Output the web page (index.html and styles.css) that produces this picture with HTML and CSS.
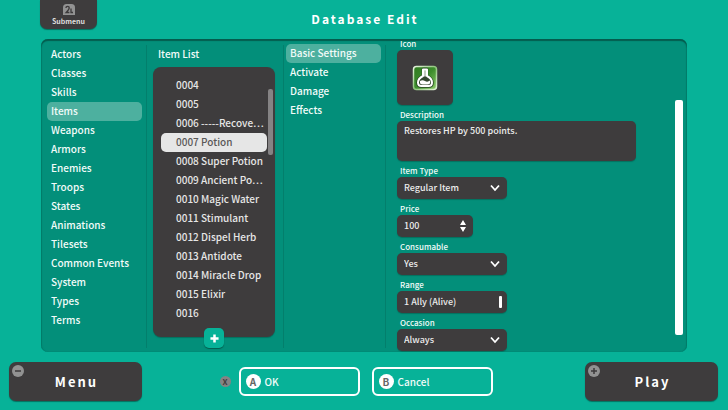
FILE: index.html
```html
<!DOCTYPE html>
<html lang="en">
<head>
<meta charset="utf-8">
<meta name="viewport" content="width=device-width, initial-scale=1">
<title>Database Edit</title>
<link rel="stylesheet" href="styles.css">
</head>
<body>
<header class="header">
  <button class="submenu" type="button">
    <svg class="submenu-key" viewBox="0 0 12 11" aria-hidden="true">
      <path d="M3.5 0H8.5Q12 0 12 3.5V11H0V3.5Q0 0 3.500 0Z" fill="#929292"/>
      <path d="M3 4Q3 2.300 4.600 2.300Q6.200 2.300 6.200 4Q6.200 5.400 3.200 8.500H6.400M8 4.500V8.500H10" fill="none" stroke="#3c3a3b" stroke-width="1.300"/>
    </svg>
    <span>Submenu</span>
  </button>
  <h1 class="title">Database Edit</h1>
</header>

<main class="panel">
  <nav class="column categories">
    <button class="tab" type="button">Actors</button>
    <button class="tab" type="button">Classes</button>
    <button class="tab" type="button">Skills</button>
    <button class="tab tab-active" type="button">Items</button>
    <button class="tab" type="button">Weapons</button>
    <button class="tab" type="button">Armors</button>
    <button class="tab" type="button">Enemies</button>
    <button class="tab" type="button">Troops</button>
    <button class="tab" type="button">States</button>
    <button class="tab" type="button">Animations</button>
    <button class="tab" type="button">Tilesets</button>
    <button class="tab" type="button">Common Events</button>
    <button class="tab" type="button">System</button>
    <button class="tab" type="button">Types</button>
    <button class="tab" type="button">Terms</button>
  </nav>

  <section class="column items">
    <h2 class="items-title">Item List</h2>
    <div class="item-box">
      <div class="item-list">
        <button class="item" type="button">0004</button>
        <button class="item" type="button">0005</button>
        <button class="item" type="button">0006 -----Recove⋯</button>
        <button class="item item-active" type="button">0007 Potion</button>
        <button class="item" type="button">0008 Super Potion</button>
        <button class="item" type="button">0009 Ancient Po⋯</button>
        <button class="item" type="button">0010 Magic Water</button>
        <button class="item" type="button">0011 Stimulant</button>
        <button class="item" type="button">0012 Dispel Herb</button>
        <button class="item" type="button">0013 Antidote</button>
        <button class="item" type="button">0014 Miracle Drop</button>
        <button class="item" type="button">0015 Elixir</button>
        <button class="item" type="button">0016</button>
      </div>
      <span class="item-thumb"></span>
      <button class="add" type="button" aria-label="Add">
        <svg viewBox="0 0 10 10" aria-hidden="true"><path d="M5 0.500V9.500M0.500 5H9.500" stroke="#fff" stroke-width="2.800"/></svg>
      </button>
    </div>
  </section>

  <nav class="column sections">
    <button class="tab tab-active" type="button">Basic Settings</button>
    <button class="tab" type="button">Activate</button>
    <button class="tab" type="button">Damage</button>
    <button class="tab" type="button">Effects</button>
  </nav>

  <form class="form">
    <label class="label" for="icon">Icon</label>
    <button class="box icon-box" id="icon" type="button">
      <svg class="potion" viewBox="0 0 26 26" aria-hidden="true">
        <defs>
          <linearGradient id="green" x1="0" y1="0" x2="1" y2="1">
            <stop offset="0" stop-color="#2f7a20"/>
            <stop offset="0.500" stop-color="#3c8d2c"/>
            <stop offset="1" stop-color="#8fce6c"/>
          </linearGradient>
          <linearGradient id="frame" x1="0" y1="0" x2="1" y2="1">
            <stop offset="0" stop-color="#e6f5df"/>
            <stop offset="0.500" stop-color="#8cc47a"/>
            <stop offset="1" stop-color="#e2f3d8"/>
          </linearGradient>
        </defs>
        <rect x="1.500" y="1.500" width="23" height="23" rx="3" fill="url(#green)" stroke="url(#frame)" stroke-width="1.500"/>
        <path d="M11 4H15V10.500Q20.500 13.500 20.500 17.500Q20.500 21.500 17 21.500H9Q5.500 21.500 5.500 17.500Q5.500 13.500 11 10.500Z" fill="none" stroke="#234020" stroke-width="2.500" stroke-linejoin="round"/>
        <path d="M11 4.500H15V11Q20 13.500 20 17.500Q20 21 16.500 21H9.500Q6 21 6 17.500Q6 13.500 11 11Z" fill="#33462f" stroke="#fff" stroke-width="2" stroke-linejoin="round"/>
        <path d="M12.200 5H13.800V11.500H12.200Z" fill="#e8efe5"/>
        <path d="M8 16Q10.500 14.500 13 16T18 15.500Q19 19.500 15.500 19.500H10.500Q7.500 19.500 8 16Z" fill="#fff"/>
      </svg>
    </button>

    <label class="label" for="description">Description</label>
    <textarea class="box description" id="description">Restores HP by 500 points.</textarea>

    <label class="label" for="item-type">Item Type</label>
    <div class="field">
      <select class="box control" id="item-type"><option>Regular Item</option></select>
      <svg class="chevron" viewBox="0 0 10 8" aria-hidden="true"><path d="M1 1.500L5 6L9 1.500"/></svg>
    </div>

    <label class="label" for="price">Price</label>
    <div class="field field-short">
      <input class="box control" id="price" type="number" value="100">
      <svg class="spinner" viewBox="0 0 6 12" aria-hidden="true"><path d="M3 0L6 5H0ZM3 12L0 7H6Z"/></svg>
    </div>

    <label class="label" for="consumable">Consumable</label>
    <div class="field">
      <select class="box control" id="consumable"><option>Yes</option></select>
      <svg class="chevron" viewBox="0 0 10 8" aria-hidden="true"><path d="M1 1.500L5 6L9 1.500"/></svg>
    </div>

    <label class="label" for="range">Range</label>
    <button class="box control range" id="range" type="button">1 Ally (Alive)<span class="range-mark"></span></button>

    <label class="label" for="occasion">Occasion</label>
    <div class="field">
      <select class="box control" id="occasion"><option>Always</option></select>
      <svg class="chevron" viewBox="0 0 10 8" aria-hidden="true"><path d="M1 1.500L5 6L9 1.500"/></svg>
    </div>
    <span class="form-thumb"></span>
  </form>
</main>

<footer class="footer">
  <button class="big" type="button">
    <svg class="badge" viewBox="0 0 12 12" aria-hidden="true"><circle cx="6" cy="6" r="6" fill="#929292"/><path d="M3 6H9" stroke="#3c3a3b" stroke-width="1.500"/></svg>
    Menu
  </button>
  <div class="prompts">
    <span class="key-x">X</span>
    <button class="prompt" type="button"><span class="key">A</span>OK</button>
    <button class="prompt" type="button"><span class="key">B</span>Cancel</button>
  </div>
  <button class="big" type="button">
    <svg class="badge" viewBox="0 0 12 12" aria-hidden="true"><circle cx="6" cy="6" r="6" fill="#929292"/><path d="M3 6H9M6 3V9" stroke="#3c3a3b" stroke-width="1.500"/></svg>
    Play
  </button>
</footer>
</body>
</html>
```
FILE: styles.css
```css
:root {
  --bg: #07b298;
  --panel: #038f7a;
  --dark: #3e3c3d;
  --active: #4db09f;
  --line: #037f6c;
}

* { box-sizing: border-box; }

body {
  margin: 0;
  min-height: 100vh;
  display: flex;
  flex-direction: column;
  background: var(--bg);
  color: #f2fbf9;
  font: 500 10px/19px "Noto Sans CJK JP", "Noto Sans", sans-serif;
  overflow: hidden;
}

button, input, select, textarea {
  margin: 0;
  padding: 0;
  border: 0;
  background: none;
  color: inherit;
  font: inherit;
  letter-spacing: inherit;
  text-align: left;
}

svg { display: block; }

/* Header */
.header {
  display: grid;
  grid-template-columns: 57px 1fr 57px;
  align-items: start;
  height: 39px;
  padding: 0 40px;
}

.submenu {
  display: flex;
  flex-direction: column;
  align-items: center;
  height: 29px;
  padding-top: 4px;
  border-radius: 0 0 7px 7px;
  background: var(--dark);
  box-shadow: 0 1px 1px #04705f;
  font-size: 7px;
  font-weight: 700;
  line-height: 13px;
  color: #dedede;
}

.submenu-key { width: 12px; height: 11px; }

.title {
  margin: 0;
  padding-left: 2px;
  font-size: 12px;
  font-weight: 700;
  line-height: 38px;
  letter-spacing: 2px;
  text-align: center;
  color: #fff;
}

/* Main panel */
.panel {
  flex: 1;
  display: grid;
  grid-template-columns: 106px 137px 102px 1fr;
  margin: 0 41px;
  border-radius: 7px;
  background: var(--panel);
  box-shadow: inset 0 2px 1px #045c4e, inset 1px 0 1px var(--line), inset -1px 0 1px var(--line);
  overflow: hidden;
}

.column {
  position: relative;
  display: flex;
  flex-direction: column;
}

.column::after {
  content: "";
  position: absolute;
  top: 6px;
  right: 0;
  bottom: 4px;
  width: 1px;
  background: var(--line);
}

.categories { padding: 6px 5px 0 6px; }
.sections { padding: 5px 5px 0 2px; }

.tab {
  height: 19px;
  padding: 0 0 2px 4px;
  line-height: 17px;
  border-radius: 5px;
  white-space: nowrap;
}

.tab-active { background: var(--active); }

.items { padding: 5px 9px 15px 6px; }

.items-title {
  margin: 0 0 4px 5px;
  font-size: 10px;
  font-weight: 500;
}

.item-box {
  position: relative;
  flex: 1;
  padding: 9px 8px 0;
  border-radius: 8px;
  background: var(--dark);
  box-shadow: 0 1px 1px #04705f;
  color: #e6e6e6;
}

.item-list {
  display: flex;
  flex-direction: column;
}

.item {
  height: 19px;
  padding: 0 0 2px 15px;
  line-height: 17px;
  border-radius: 5px;
  white-space: nowrap;
}

.item-active { background: #e6e6e6; color: #5a5858; }

.item-thumb {
  position: absolute;
  top: 22px;
  right: 2px;
  width: 5px;
  height: 66px;
  border-radius: 2px;
  background: #858384;
}

.add {
  position: absolute;
  bottom: -11px;
  left: 51px;
  display: grid;
  place-items: center;
  width: 20px;
  height: 20px;
  border-radius: 5px;
  background: var(--bg);
  box-shadow: 0 1px 1px #045c4e;
}

.add svg { width: 9px; height: 9px; }

/* Form */
.form {
  position: relative;
  display: flex;
  flex-direction: column;
  align-items: flex-start;
  margin-top: -5px;
  padding-left: 11px;
}

.form > * { flex-shrink: 0; }

.label {
  padding: 4px 0 0 3px;
  font-size: 8px;
  line-height: 12px;
}

.box {
  border-radius: 5px;
  background: var(--dark);
  box-shadow: 0 1px 1px #04705f;
  color: #ececec;
}

.icon-box {
  display: grid;
  place-items: center;
  width: 56px;
  height: 55px;
}

.potion { width: 26px; height: 26px; }

.description {
  width: calc(100% - 51px);
  height: 40px;
  padding: 0 7px;
  font-size: 9px;
  resize: none;
  outline: 0;
}

.field { position: relative; width: 110px; }
.field-short { width: 76px; }

.control {
  display: block;
  width: 100%;
  height: 22px;
  padding: 0 7px;
  font-size: 9px;
  line-height: 22px;
  appearance: none;
  outline: 0;
}

input::-webkit-inner-spin-button { display: none; }

.chevron, .spinner { position: absolute; pointer-events: none; }
.chevron { top: 7px; right: 7px; width: 10px; height: 8px; fill: none; stroke: #fff; stroke-width: 1.8px; }
.spinner { top: 5px; right: 7px; width: 6px; height: 12px; fill: #fff; }

.range {
  display: flex;
  align-items: center;
  justify-content: space-between;
  width: 110px;
  padding-right: 5px;
}

.range-mark { width: 3px; height: 12px; border-radius: 1px; background: #fff; }

.form-thumb {
  position: absolute;
  top: 66px;
  right: 4px;
  width: 8px;
  height: 235px;
  border-radius: 2px;
  background: #fff;
}

/* Footer */
.footer {
  display: grid;
  grid-template-columns: 133px 1fr 133px;
  height: 58px;
  padding: 10px 10px 9px 9px;
}

.big {
  position: relative;
  padding-left: 2px;
  border-radius: 7px;
  background: var(--dark);
  box-shadow: 0 1px 1px #04705f;
  color: #fff;
  font-size: 13px;
  font-weight: 700;
  letter-spacing: 2px;
  text-align: center;
}

.badge { position: absolute; top: 3px; left: 3px; width: 12px; height: 12px; }

.prompts {
  display: flex;
  align-items: center;
  justify-content: center;
  padding-right: 15px;
}

.key-x {
  width: 11px;
  height: 11px;
  margin-right: 8px;
  border-radius: 50%;
  background: #858384;
  color: #3e3c3d;
  font-size: 8px;
  font-weight: 700;
  line-height: 11px;
  text-align: center;
}

.prompt {
  display: flex;
  align-items: center;
  gap: 4px;
  width: 121px;
  height: 29px;
  padding-left: 5px;
  border: 2px solid #fff;
  border-radius: 6px;
}

.prompt + .prompt { margin-left: 12px; }

.key {
  width: 15px;
  height: 15px;
  border-radius: 50%;
  background: #fff;
  color: #666;
  font-size: 10px;
  font-weight: 700;
  line-height: 15px;
  text-align: center;
}
```
